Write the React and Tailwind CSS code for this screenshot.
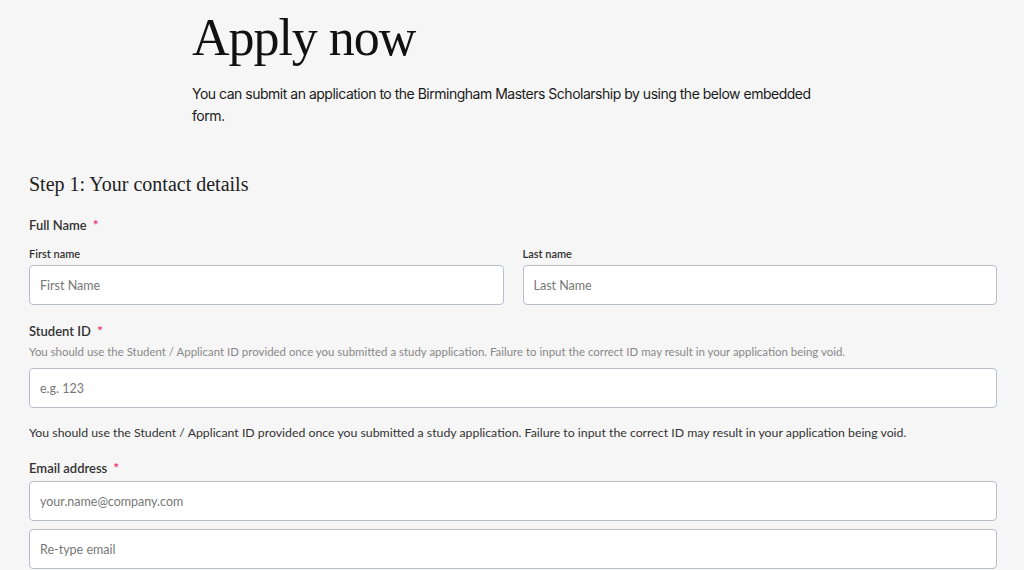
import React from 'react';

const Star = () => <span className="ml-[6px] text-[#e8336a] text-[14px] leading-none">*</span>;

function Field({ placeholder, className = '' }) {
  return (
    <input
      type="text"
      placeholder={placeholder}
      className={`block w-full h-[40px] rounded-[4px] border border-[#b9bfca] bg-white px-[10px] text-[12.5px] placeholder:text-[#777] outline-none ${className}`}
    />
  );
}

export default function App() {
  return (
    <div className="min-h-[570px] bg-[#f6f6f6] text-[#1a1a1a] overflow-hidden">
      <div className="pl-[192px] pt-[6px]">
        <h1 className="font-['Liberation_Serif',serif] text-[52px] leading-[64px] tracking-[-0.02em] text-[#111]">Apply now</h1>
        <p className="mt-[13px] w-[640px] font-['Inter',sans-serif] text-[14px] leading-[22px] tracking-[-0.035em] text-[#1a1a1a]">
          You can submit an application to the Birmingham Masters Scholarship by using the below embedded form.
        </p>
      </div>

      <form className="pl-[29px] pr-[27px] pt-[45px] font-['Lato',sans-serif]">
        <h2 className="font-['Liberation_Serif',serif] text-[20px] leading-[24px] text-[#222]">Step 1: Your contact details</h2>

        <div className="mt-[21px] text-[13px] font-semibold text-[#333] leading-[16px]">Full Name<Star /></div>
        <div className="mt-[14px] grid grid-cols-2 gap-[19px]">
          <div>
            <div className="text-[11px] font-semibold text-[#333] leading-[14px] mb-[4px]">First name</div>
            <Field placeholder="First Name" />
          </div>
          <div>
            <div className="text-[11px] font-semibold text-[#333] leading-[14px] mb-[4px]">Last name</div>
            <Field placeholder="Last Name" />
          </div>
        </div>

        <div className="mt-[18px] text-[13px] font-semibold text-[#333] leading-[16px]">Student ID<Star /></div>
        <div className="mt-[6px] text-[11.45px] text-[#888] leading-[14px]">
          You should use the Student / Applicant ID provided once you submitted a study application. Failure to input the correct ID may result in your application being void.
        </div>
        <Field placeholder="e.g. 123" className="mt-[9px]" />
        <div className="mt-[17px] text-[12.3px] text-[#333] leading-[15px]">
          You should use the Student / Applicant ID provided once you submitted a study application. Failure to input the correct ID may result in your application being void.
        </div>

        <div className="mt-[20px] text-[13px] font-semibold text-[#333] leading-[16px]">Email address<Star /></div>
        <Field placeholder="your.name@company.com" className="mt-[5px]" />
        <Field placeholder="Re-type email" className="mt-[8px]" />
      </form>
    </div>
  );
}
